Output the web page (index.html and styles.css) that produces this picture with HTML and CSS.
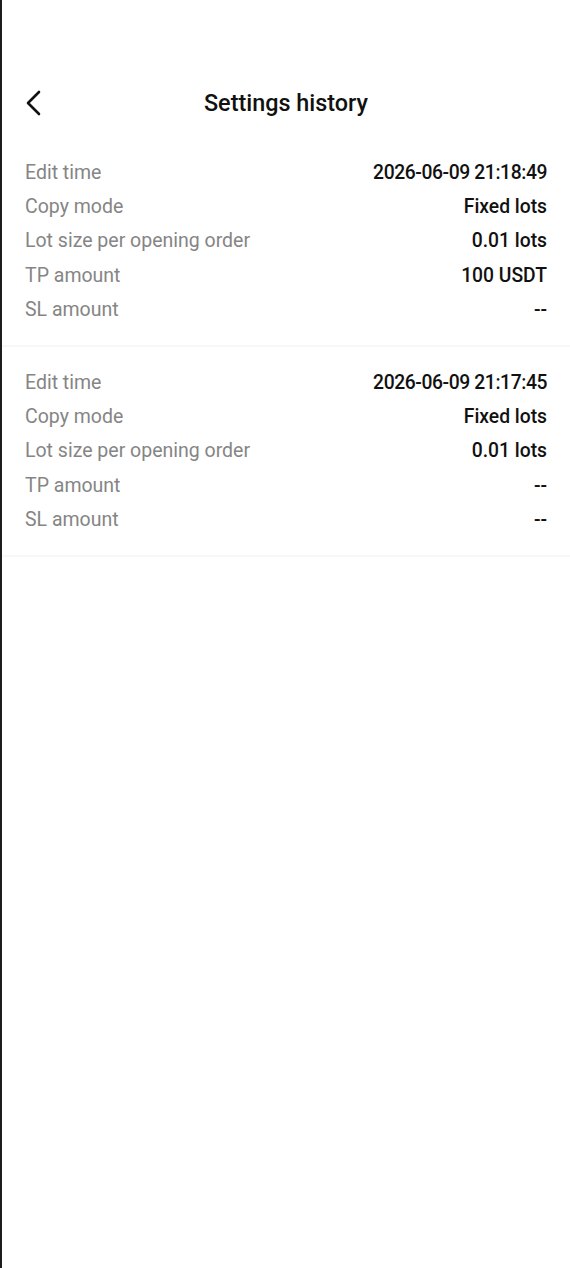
FILE: index.html
```html
<!DOCTYPE html>
<html lang="en">
<head>
    <meta charset="UTF-8">
    <meta name="viewport" content="width=device-width, initial-scale=1.0">
    <title>Settings history</title>
    <link rel="stylesheet" href="styles.css">
</head>
<body>
    <div class="page">
        <header class="top-bar">
            <button class="back-btn" aria-label="Back">
                <svg width="18" height="26" viewBox="0 0 18 26">
                    <path d="M14 2 L3 13 L14 24" fill="none" stroke="#111" stroke-width="2.6" stroke-linecap="round" stroke-linejoin="round"/>
                </svg>
            </button>
            <h1>Settings history</h1>
        </header>

        <div class="record">
            <div class="row"><span class="label">Edit time</span><span class="value time">2026-06-09 21:18:49</span></div>
            <div class="row"><span class="label">Copy mode</span><span class="value">Fixed lots</span></div>
            <div class="row"><span class="label">Lot size per opening order</span><span class="value">0.01 lots</span></div>
            <div class="row"><span class="label">TP amount</span><span class="value">100 USDT</span></div>
            <div class="row"><span class="label">SL amount</span><span class="value">--</span></div>
        </div>

        <div class="record">
            <div class="row"><span class="label">Edit time</span><span class="value time">2026-06-09 21:17:45</span></div>
            <div class="row"><span class="label">Copy mode</span><span class="value">Fixed lots</span></div>
            <div class="row"><span class="label">Lot size per opening order</span><span class="value">0.01 lots</span></div>
            <div class="row"><span class="label">TP amount</span><span class="value">--</span></div>
            <div class="row"><span class="label">SL amount</span><span class="value">--</span></div>
        </div>
    </div>
</body>
</html>
```

FILE: styles.css
```css
* {
    box-sizing: border-box;
}

html, body {
    margin: 0;
    height: 100%;
}

body {
    font-family: Roboto, 'Liberation Sans', sans-serif;
    background: #fff;
    color: #111;
}

.page {
    height: 100%;
    padding-top: 69px;
    border-left: 2px solid #1c1c1c;
    overflow: hidden;
}

.top-bar {
    position: relative;
    height: 68px;
    display: flex;
    justify-content: center;
}

.back-btn {
    position: absolute;
    left: 23px;
    top: 21px;
    padding: 0;
    border: none;
    background: none;
    cursor: pointer;
}

h1 {
    margin: 0;
    font-size: 23.4px;
    font-weight: 500;
    line-height: 68px;
}

.record {
    padding: 18px 23px;
    border-bottom: 2px solid #f7f7f7;
}

.row {
    display: flex;
    justify-content: space-between;
    align-items: center;
    height: 34.4px;
}

.label {
    font-size: 19.5px;
    color: #858585;
}

.value {
    font-size: 19.3px;
    font-weight: 500;
    color: #111;
}

.time {
    letter-spacing: -0.4px;
}
```
